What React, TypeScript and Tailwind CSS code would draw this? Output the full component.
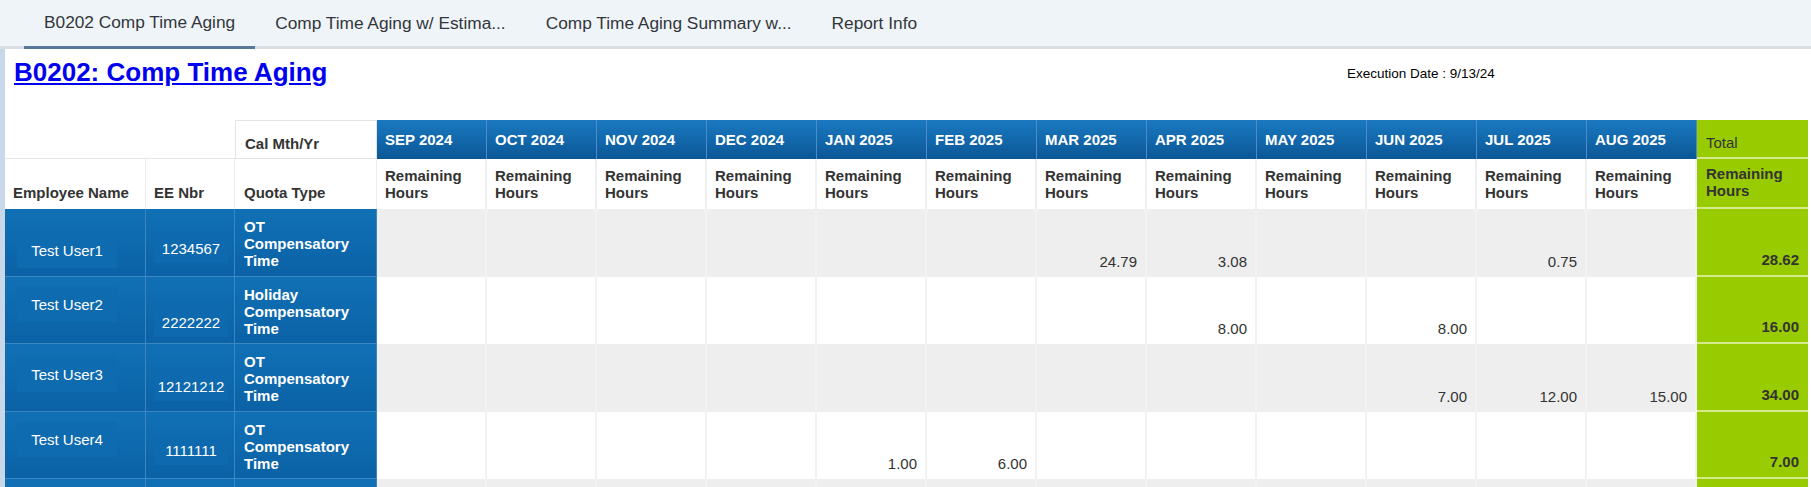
import React from "react";

const months = [
  "SEP 2024",
  "OCT 2024",
  "NOV 2024",
  "DEC 2024",
  "JAN 2025",
  "FEB 2025",
  "MAR 2025",
  "APR 2025",
  "MAY 2025",
  "JUN 2025",
  "JUL 2025",
  "AUG 2025",
];

const tabs = ["B0202 Comp Time Aging", "Comp Time Aging w/ Estima...", "Comp Time Aging Summary w...", "Report Info"];

type Row = {
  name: string;
  nbr: string;
  quota: string;
  values: Record<number, string>;
  total: string;
  shaded: boolean;
  height: string;
  namePad: string;
  nbrPad: string;
};

const rows: Row[] = [
  {
    name: "Test User1",
    nbr: "1234567",
    quota: "OT Compensatory Time",
    values: { 6: "24.79", 7: "3.08", 10: "0.75" },
    total: "28.62",
    shaded: true,
    height: "h-[68px]",
    namePad: "pt-[24px]",
    nbrPad: "pt-[25px]",
  },
  {
    name: "Test User2",
    nbr: "2222222",
    quota: "Holiday Compensatory Time",
    values: { 7: "8.00", 9: "8.00" },
    total: "16.00",
    shaded: false,
    height: "h-[67px]",
    namePad: "pt-[10px]",
    nbrPad: "pt-[31px]",
  },
  {
    name: "Test User3",
    nbr: "12121212",
    quota: "OT Compensatory Time",
    values: { 9: "7.00", 10: "12.00", 11: "15.00" },
    total: "34.00",
    shaded: true,
    height: "h-[68px]",
    namePad: "pt-[13px]",
    nbrPad: "pt-[28px]",
  },
  {
    name: "Test User4",
    nbr: "1111111",
    quota: "OT Compensatory Time",
    values: { 4: "1.00", 5: "6.00" },
    total: "7.00",
    shaded: false,
    height: "h-[67px]",
    namePad: "pt-[10px]",
    nbrPad: "pt-[24px]",
  },
];

const blueCell =
  "bg-linear-to-b from-[#1170b5] to-[#0b62a6] border-r border-b border-[#3b87c4] text-white align-top";

export default function App() {
  return (
    <div className="min-h-screen bg-white font-['Liberation_Sans',Arial,sans-serif] text-[#333]">
      {/* tab strip */}
      <div className="flex h-[49px] border-b-[3px] border-[#dadee3] bg-[#eff4f9] pl-[24px]">
        {tabs.map((t, i) => (
          <div
            key={t}
            className={
              i === 0
                ? "-mb-[3px] flex items-center border-b-[3px] border-[#57789a] px-5 pb-[1px] text-[17.3px] text-[#32363a]"
                : "flex items-center px-5 pt-[2px] text-[17.3px] text-[#32363a]"
            }
          >
            {t}
          </div>
        ))}
      </div>

      <div className="border-l-[5px] border-[#c8d8ea]">
        <div className="flex h-[71px] items-start pt-[8px] pl-[9px]">
          <a href="#" className="w-[1333px] text-[26px] leading-[30px] font-bold text-[#0000ee] underline">
            B0202: Comp Time Aging
          </a>
          <div className="mt-[9px] text-[13.5px] leading-[16px] text-black">Execution Date : 9/13/24</div>
        </div>

        <table className="w-[1803px] table-fixed border-separate border-spacing-0 text-[15px] leading-[17px]">
          <colgroup>
            <col className="w-[141px]" />
            <col className="w-[89px]" />
            <col className="w-[142px]" />
            {months.map((m) => (
              <col key={m} className="w-[110px]" />
            ))}
            <col className="w-[111px]" />
          </colgroup>
          <thead>
            <tr className="h-[39px]">
              <th colSpan={2} className="border-b border-[#e8e8e8] bg-white" />
              <th className="border-t border-r border-b border-l border-[#e3e3e3] px-[9px] pb-[6px] text-left align-bottom font-bold text-[#333]">
                Cal Mth/Yr
              </th>
              {months.map((m) => (
                <th
                  key={m}
                  className="border-r border-[#4a8dca] bg-linear-to-b from-[#1a79c1] to-[#0b5796] px-[8px] text-left align-middle font-bold text-white"
                >
                  {m}
                </th>
              ))}
              <th className="border-b-2 border-[#d4ea8c] bg-[#99cc00] px-[9px] pb-[6px] text-left align-bottom font-normal text-[#333]">
                Total
              </th>
            </tr>
            <tr className="h-[50px]">
              <th className="border-r border-[#ececec] px-[8px] pb-[8px] text-left align-bottom font-bold">Employee Name</th>
              <th className="border-r border-[#ececec] px-[8px] pb-[8px] text-left align-bottom font-bold">EE Nbr</th>
              <th className="border-r border-[#ececec] px-[9px] pb-[8px] text-left align-bottom font-bold">Quota Type</th>
              {months.map((m) => (
                <th key={m} className="border-r-2 border-[#f0f0f0] px-[8px] pb-[8px] text-left align-bottom font-bold">
                  Remaining
                  <br />
                  Hours
                </th>
              ))}
              <th className="border-b-2 border-[#d4ea8c] bg-[#99cc00] px-[9px] pb-[8px] text-left align-bottom font-bold text-[#333]">
                Remaining
                <br />
                Hours
              </th>
            </tr>
          </thead>
          <tbody>
            {rows.map((r) => (
              <tr key={r.name} className={r.height}>
                <td className={`${blueCell} pl-[12px] ${r.namePad}`}>
                  <div className="w-[100px] bg-[#0f6bb0] py-[9px] text-center">{r.name}</div>
                </td>
                <td className={`${blueCell} px-[8px] ${r.nbrPad}`}>
                  <div className="mx-auto w-[74px] bg-[#0e69ae] py-[6px] text-center">{r.nbr}</div>
                </td>
                <td className={`${blueCell} px-[9px] pt-[9px] font-bold`}>{r.quota}</td>
                {months.map((m, i) => (
                  <td
                    key={m}
                    className={`border-r-2 border-[#f2f2f2] px-[8px] pb-[7px] text-right align-bottom text-[#333] ${
                      r.shaded ? "bg-[#eeeeee]" : "bg-white"
                    }`}
                  >
                    {r.values[i] ?? ""}
                  </td>
                ))}
                <td className="border-b-2 border-[#d4ea8c] bg-[#99cc00] px-[9px] pb-[7px] text-right align-bottom font-bold text-[#333]">
                  {r.total}
                </td>
              </tr>
            ))}
            <tr className="h-[68px]">
              <td className={blueCell} />
              <td className={blueCell} />
              <td className={blueCell} />
              {months.map((m) => (
                <td key={m} className="border-r-2 border-[#f2f2f2] bg-[#eeeeee]" />
              ))}
              <td className="bg-[#99cc00]" />
            </tr>
          </tbody>
        </table>
      </div>
    </div>
  );
}
